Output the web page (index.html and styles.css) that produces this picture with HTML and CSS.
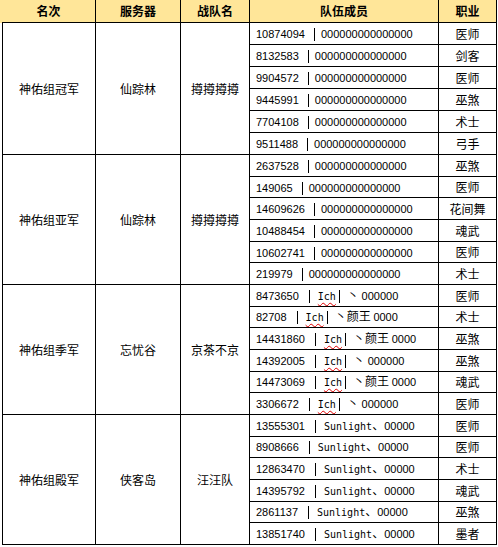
FILE: index.html
```html
<!DOCTYPE html>
<html lang="zh">
<head>
<meta charset="utf-8">
<title>神佑组排名</title>
<link rel="stylesheet" href="styles.css">
</head>
<body>
<table class="rank">
  <thead>
    <tr class="head">
      <th class="c1">名次</th>
      <th class="c2">服务器</th>
      <th class="c3">战队名</th>
      <th class="c4">队伍成员</th>
      <th class="c5">职业</th>
    </tr>
  </thead>
  <tbody>
    <tr class="r22">
      <td class="c1 grp" rowspan="6">神佑组冠军</td>
      <td class="grp" rowspan="6">仙踪林</td>
      <td class="grp" rowspan="6">撙撙撙撙</td>
      <td class="mem"><span class="num">10874094</span><span class="bar"></span><span class="num">000000000000000</span></td>
      <td class="job">医师</td>
    </tr>
    <tr class="r22"><td class="mem"><span class="num">8132583</span><span class="bar"></span><span class="num">000000000000000</span></td><td class="job">剑客</td></tr>
    <tr class="r22"><td class="mem"><span class="num">9904572</span><span class="bar"></span><span class="num">000000000000000</span></td><td class="job">医师</td></tr>
    <tr class="r22"><td class="mem"><span class="num">9445991</span><span class="bar"></span><span class="num">000000000000000</span></td><td class="job">巫煞</td></tr>
    <tr class="r22"><td class="mem"><span class="num">7704108</span><span class="bar"></span><span class="num">000000000000000</span></td><td class="job">术士</td></tr>
    <tr class="r22"><td class="mem"><span class="num">9511488</span><span class="bar"></span><span class="num">000000000000000</span></td><td class="job">弓手</td></tr>

    <tr class="r22">
      <td class="c1 grp" rowspan="6">神佑组亚军</td>
      <td class="grp" rowspan="6">仙踪林</td>
      <td class="grp" rowspan="6">撙撙撙撙</td>
      <td class="mem"><span class="num">2637528</span><span class="bar"></span><span class="num">000000000000000</span></td>
      <td class="job">巫煞</td>
    </tr>
    <tr class="r21"><td class="mem"><span class="num">149065</span><span class="bar"></span><span class="num">000000000000000</span></td><td class="job">医师</td></tr>
    <tr class="r22"><td class="mem"><span class="num">14609626</span><span class="bar"></span><span class="num">000000000000000</span></td><td class="job">花间舞</td></tr>
    <tr class="r22"><td class="mem"><span class="num">10488454</span><span class="bar"></span><span class="num">000000000000000</span></td><td class="job">魂武</td></tr>
    <tr class="r21"><td class="mem"><span class="num">10602741</span><span class="bar"></span><span class="num">000000000000000</span></td><td class="job">医师</td></tr>
    <tr class="r22"><td class="mem"><span class="num">219979</span><span class="bar"></span><span class="num">000000000000000</span></td><td class="job">术士</td></tr>

    <tr class="r22">
      <td class="c1 grp" rowspan="6">神佑组季军</td>
      <td class="grp" rowspan="6">忘忧谷</td>
      <td class="grp" rowspan="6">京茶不京</td>
      <td class="mem"><span class="num">8473650</span><span class="bar wide"></span><span class="mono typo">Ich</span><span class="bar tight"></span><span class="cjk">丶</span> <span class="num">000000</span></td>
      <td class="job">医师</td>
    </tr>
    <tr class="r21"><td class="mem"><span class="num">82708</span><span class="bar wide"></span><span class="mono typo">Ich</span><span class="bar tight"></span><span class="cjk">丶颜王</span> <span class="num">0000</span></td><td class="job">术士</td></tr>
    <tr class="r22"><td class="mem"><span class="num">14431860</span><span class="bar wide"></span><span class="mono typo">Ich</span><span class="bar tight"></span><span class="cjk">丶颜王</span> <span class="num">0000</span></td><td class="job">巫煞</td></tr>
    <tr class="r22"><td class="mem"><span class="num">14392005</span><span class="bar wide"></span><span class="mono typo">Ich</span><span class="bar tight"></span><span class="cjk">丶</span> <span class="num">000000</span></td><td class="job">巫煞</td></tr>
    <tr class="r21"><td class="mem"><span class="num">14473069</span><span class="bar wide"></span><span class="mono typo">Ich</span><span class="bar tight"></span><span class="cjk">丶颜王</span> <span class="num">0000</span></td><td class="job">魂武</td></tr>
    <tr class="r22"><td class="mem"><span class="num">3306672</span><span class="bar wide"></span><span class="mono typo">Ich</span><span class="bar tight"></span><span class="cjk">丶</span> <span class="num">000000</span></td><td class="job">医师</td></tr>

    <tr class="r22">
      <td class="c1 grp" rowspan="6">神佑组殿军</td>
      <td class="grp" rowspan="6">侠客岛</td>
      <td class="grp" rowspan="6">汪汪队</td>
      <td class="mem"><span class="num">13555301</span><span class="bar wide"></span><span class="mono">Sunlight</span><span class="cjk">、</span><span class="num">00000</span></td>
      <td class="job">医师</td>
    </tr>
    <tr class="r21"><td class="mem"><span class="num">8908666</span><span class="bar wide"></span><span class="mono">Sunlight</span><span class="cjk">、</span><span class="num">00000</span></td><td class="job">医师</td></tr>
    <tr class="r22"><td class="mem"><span class="num">12863470</span><span class="bar wide"></span><span class="mono">Sunlight</span><span class="cjk">、</span><span class="num">00000</span></td><td class="job">术士</td></tr>
    <tr class="r22"><td class="mem"><span class="num">14395792</span><span class="bar wide"></span><span class="mono">Sunlight</span><span class="cjk">、</span><span class="num">00000</span></td><td class="job">魂武</td></tr>
    <tr class="r21"><td class="mem"><span class="num">2861137</span><span class="bar wide"></span><span class="mono">Sunlight</span><span class="cjk">、</span><span class="num">00000</span></td><td class="job">巫煞</td></tr>
    <tr class="r22"><td class="mem"><span class="num">13851740</span><span class="bar wide"></span><span class="mono">Sunlight</span><span class="cjk">、</span><span class="num">00000</span></td><td class="job">墨者</td></tr>
  </tbody>
</table>
</body>
</html>
```

FILE: styles.css
```css
html, body {
  margin: 0;
  padding: 0;
  background: #fff;
}

body {
  font-family: "Noto Sans CJK SC", "Liberation Sans", sans-serif;
  font-size: 12px;
  color: #000;
}

.rank {
  margin-left: 2px;
  border-collapse: separate;
  border-spacing: 0;
  table-layout: fixed;
  width: 495px;
}

.rank th,
.rank td {
  box-sizing: border-box;
  padding: 0;
  border-right: 1px solid #000;
  border-bottom: 1px solid #000;
  line-height: 14px;
  white-space: nowrap;
  overflow: hidden;
}

.rank .c1 {
  border-left: 1px solid #000;
}

.head th {
  height: 23px;
  background: #ffe699;
  font-weight: bold;
  text-align: center;
  vertical-align: middle;
}

.head th.c1 {
  border-left: none;
  box-shadow: -2px 0 0 #ffe699;
  width: 94px;
}

.head th.c2 { width: 85px; }
.head th.c3 { width: 69px; }
.head th.c4 { width: 189px; }
.head th.c5 { width: 58px; }

.grp {
  text-align: center;
  vertical-align: middle;
}

.r22 td.mem, .r22 td.job { height: 22px; }
.r21 td.mem, .r21 td.job { height: 21px; }

.mem {
  text-align: left;
  padding-left: 6px !important;
  vertical-align: middle;
}

.job {
  text-align: center;
  vertical-align: middle;
}

.num {
  font-family: "Liberation Sans", sans-serif;
  font-size: 11px;
}

.bar {
  display: inline-block;
  width: 0;
  height: 13px;
  border-left: 1px solid #000;
  vertical-align: -3px;
  margin: 0 6px 0 9px;
}

.bar.wide {
  margin: 0 8px 0 10px;
}

.bar.tight {
  margin: 0 7px 0 3px;
}

.mono {
  font-family: "DejaVu Sans Mono", monospace;
  font-size: 10px;
}

.typo {
  text-decoration: underline wavy #e00000;
  text-decoration-thickness: 1px;
  text-underline-offset: 2px;
}

.cjk {
  font-family: "Noto Sans CJK SC", sans-serif;
  font-size: 12px;
}
```
